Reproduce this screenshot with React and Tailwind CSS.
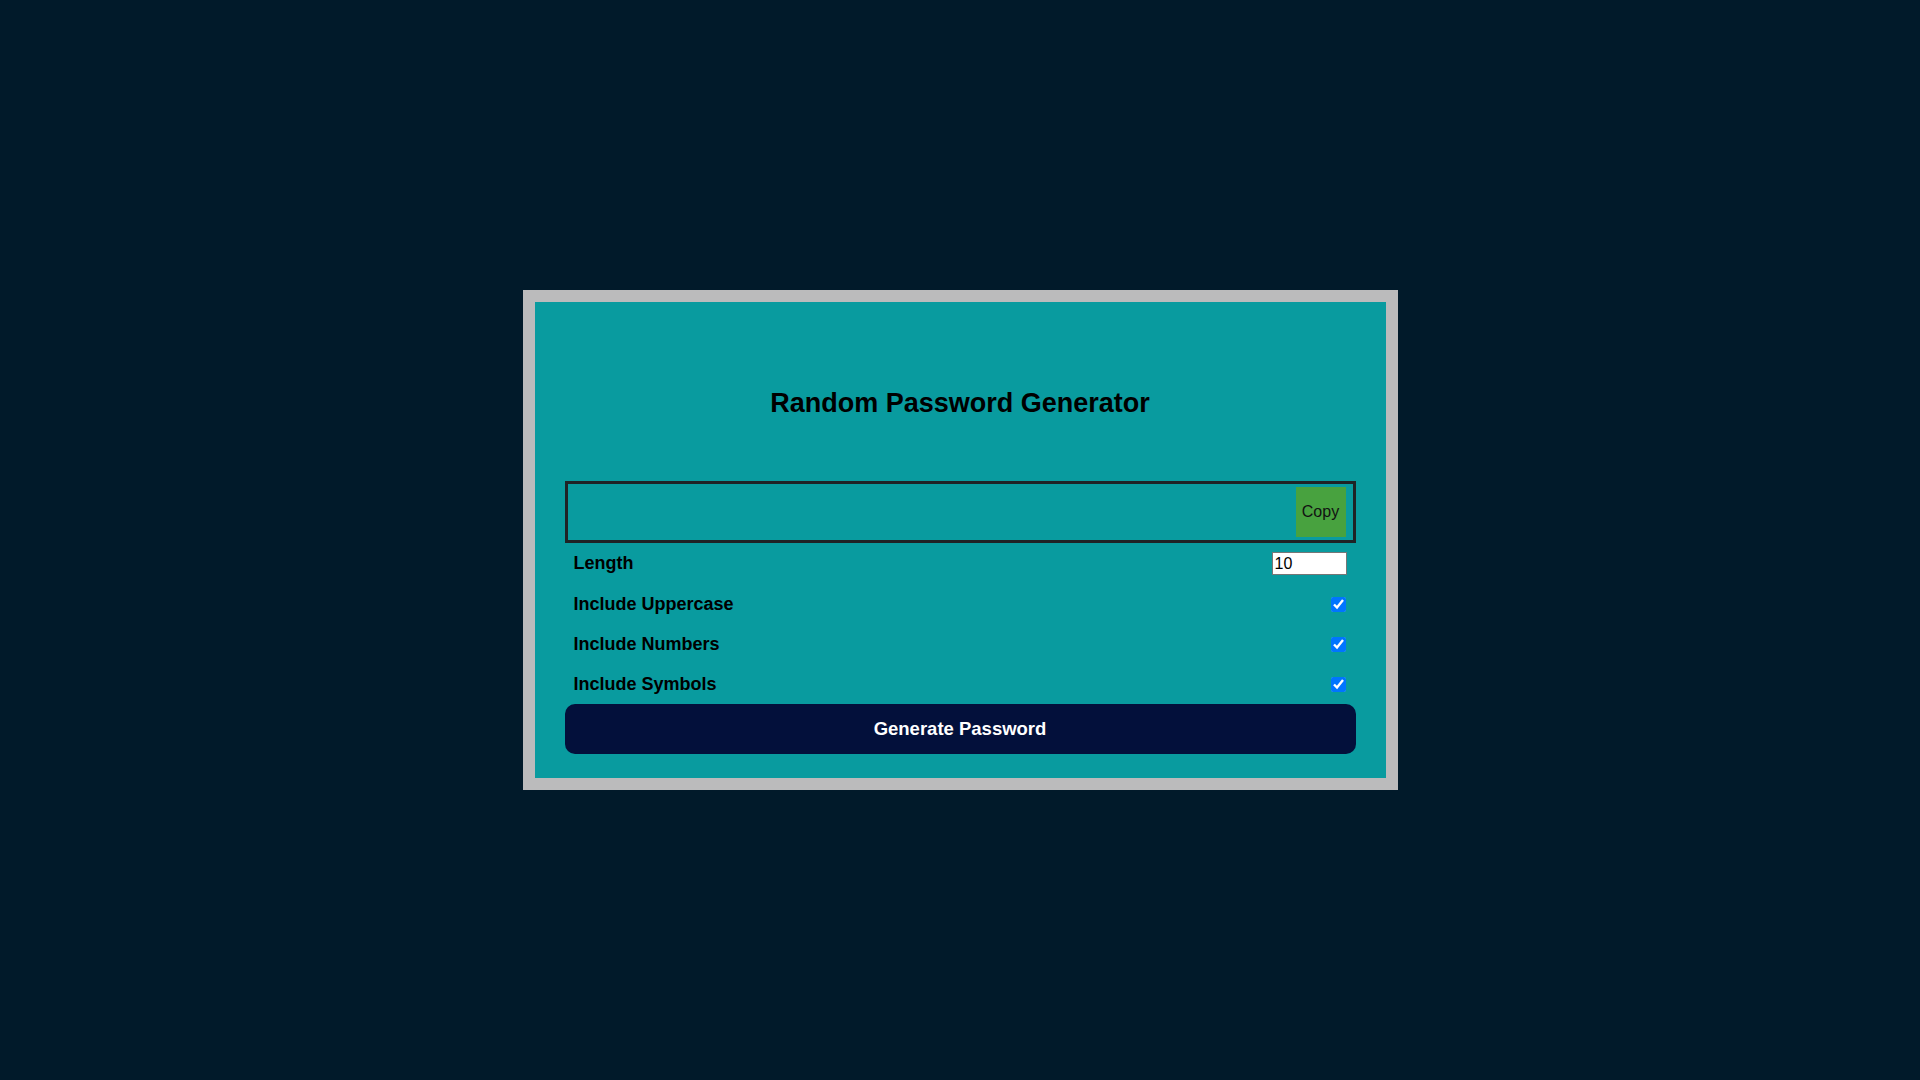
import React, { useState } from "react";

const chars = {
  lower: "abcdefghijklmnopqrstuvwxyz",
  upper: "ABCDEFGHIJKLMNOPQRSTUVWXYZ",
  numbers: "0123456789",
  symbols: "!@#$%^&*()_+-=[]{}<>?",
};

function Option({ label, checked, onChange }) {
  return (
    <div className="h-[40px] flex items-center justify-between pl-[9px] pr-[10px]">
      <label className="text-[18px] font-bold text-black">{label}</label>
      <input type="checkbox" checked={checked} onChange={onChange} className="w-[15px] h-[15px] m-0" />
    </div>
  );
}

export default function App() {
  const [password, setPassword] = useState("");
  const [length, setLength] = useState(10);
  const [upper, setUpper] = useState(true);
  const [numbers, setNumbers] = useState(true);
  const [symbols, setSymbols] = useState(true);

  const generate = () => {
    let pool = chars.lower;
    if (upper) pool += chars.upper;
    if (numbers) pool += chars.numbers;
    if (symbols) pool += chars.symbols;
    let out = "";
    for (let i = 0; i < length; i++) out += pool[Math.floor(Math.random() * pool.length)];
    setPassword(out);
  };

  return (
    <div className="min-h-screen bg-[#011a2a] flex items-center justify-center font-['Liberation_Sans',Arial,sans-serif]">
      <div className="w-[875px] border-[12px] border-[#bbbbbc] bg-[#099b9f] px-[30px] pt-[85px] pb-[24px]">
        <h1 className="text-[27px] leading-[32px] font-bold text-center text-black mb-[62px]">
          Random Password Generator
        </h1>

        <div className="h-[62px] border-[3px] border-[#1f2326] flex items-center justify-between pl-[8px] pr-[7px]">
          <span className="text-[18px] text-black">{password}</span>
          <button
            onClick={() => navigator.clipboard?.writeText(password)}
            className="w-[50px] h-[50px] bg-[#48a23f] text-[16px] text-[#111] flex items-center justify-center"
          >
            Copy
          </button>
        </div>

        <div className="h-[41px] flex items-center justify-between pl-[9px] pr-[9px]">
          <label className="text-[18px] font-bold text-black">Length</label>
          <input
            type="number"
            value={length}
            onChange={(e) => setLength(e.target.value)}
            className="w-[75px] h-[23px] border border-[#767676] bg-white text-[16px] leading-none px-[2px] text-black"
          />
        </div>
        <Option label="Include Uppercase" checked={upper} onChange={() => setUpper(!upper)} />
        <Option label="Include Numbers" checked={numbers} onChange={() => setNumbers(!numbers)} />
        <Option label="Include Symbols" checked={symbols} onChange={() => setSymbols(!symbols)} />

        <button
          onClick={generate}
          className="w-full h-[50px] rounded-[10px] bg-[#03103b] text-white text-[18.5px] font-bold"
        >
          Generate Password
        </button>
      </div>
    </div>
  );
}
